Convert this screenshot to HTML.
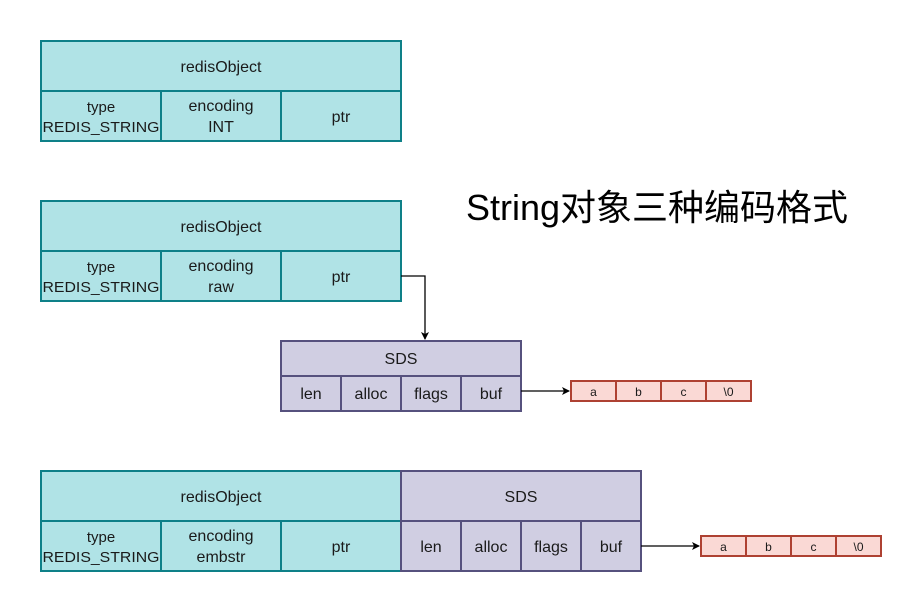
<!DOCTYPE html>
<html><head><meta charset="utf-8"><style>html,body{margin:0;padding:0;background:#fff;}svg{display:block}</style></head>
<body>
<svg width="923" height="613" viewBox="0 0 923 613" xmlns="http://www.w3.org/2000/svg" font-family="Liberation Sans, Noto Sans CJK SC, sans-serif" fill="#1a1a1a">
<defs><marker id="ar" markerWidth="8" markerHeight="8" refX="7" refY="4" orient="auto" markerUnits="userSpaceOnUse"><path d="M0,0 L8,4 L0,8 L2,4 z" fill="#000"/></marker></defs>
<g stroke="#0e8088" stroke-width="2" fill="#b0e3e6">
<rect x="41" y="41" width="360" height="50"/><rect x="41" y="91" width="120" height="50"/><rect x="161" y="91" width="120" height="50"/><rect x="281" y="91" width="120" height="50"/>
<rect x="41" y="201" width="360" height="50"/><rect x="41" y="251" width="120" height="50"/><rect x="161" y="251" width="120" height="50"/><rect x="281" y="251" width="120" height="50"/>
<rect x="41" y="471" width="360" height="50"/><rect x="41" y="521" width="120" height="50"/><rect x="161" y="521" width="120" height="50"/><rect x="281" y="521" width="120" height="50"/>
</g>
<g stroke="#56517e" stroke-width="2" fill="#d0cee2">
<rect x="281" y="341" width="240" height="35"/><rect x="281" y="376" width="60" height="35"/><rect x="341" y="376" width="60" height="35"/><rect x="401" y="376" width="60" height="35"/><rect x="461" y="376" width="60" height="35"/>
<rect x="401" y="471" width="240" height="50"/><rect x="401" y="521" width="60" height="50"/><rect x="461" y="521" width="60" height="50"/><rect x="521" y="521" width="60" height="50"/><rect x="581" y="521" width="60" height="50"/>
</g>
<g stroke="#ae4132" stroke-width="2" fill="#fad9d5">
<rect x="571" y="381" width="45" height="20"/><rect x="616" y="381" width="45" height="20"/><rect x="661" y="381" width="45" height="20"/><rect x="706" y="381" width="45" height="20"/>
<rect x="701" y="536" width="45" height="20"/><rect x="746" y="536" width="45" height="20"/><rect x="791" y="536" width="45" height="20"/><rect x="836" y="536" width="45" height="20"/>
</g>
<g stroke="#000" stroke-width="1.3" fill="none">
<path d="M401,276 H425 V339" marker-end="url(#ar)"/>
<path d="M521,391 H569" marker-end="url(#ar)"/>
<path d="M641,546 H699" marker-end="url(#ar)"/>
</g>
<g font-size="16" text-anchor="middle">
<text x="221" y="72">redisObject</text>
<text x="101" y="112" font-size="15">type</text><text x="101" y="132" font-size="15" textLength="117" lengthAdjust="spacingAndGlyphs">REDIS_STRING</text>
<text x="221" y="111">encoding</text><text x="221" y="132">INT</text><text x="341" y="122">ptr</text>
<text x="221" y="232">redisObject</text>
<text x="101" y="272" font-size="15">type</text><text x="101" y="292" font-size="15" textLength="117" lengthAdjust="spacingAndGlyphs">REDIS_STRING</text>
<text x="221" y="271">encoding</text><text x="221" y="292">raw</text><text x="341" y="282">ptr</text>
<text x="401" y="364">SDS</text>
<text x="311" y="399">len</text><text x="371" y="399">alloc</text><text x="431" y="399">flags</text><text x="491" y="399">buf</text>
<text x="221" y="502">redisObject</text>
<text x="101" y="542" font-size="15">type</text><text x="101" y="562" font-size="15" textLength="117" lengthAdjust="spacingAndGlyphs">REDIS_STRING</text>
<text x="221" y="541">encoding</text><text x="221" y="562">embstr</text><text x="341" y="552">ptr</text>
<text x="521" y="502">SDS</text>
<text x="431" y="552">len</text><text x="491" y="552">alloc</text><text x="551" y="552">flags</text><text x="611" y="552">buf</text>
<g font-size="12"><text x="593.5" y="396">a</text><text x="638.5" y="396">b</text><text x="683.5" y="396">c</text><text x="728.5" y="396">\0</text>
<text x="723.5" y="551">a</text><text x="768.5" y="551">b</text><text x="813.5" y="551">c</text><text x="858.5" y="551">\0</text></g>
</g>
<text x="466" y="220" font-size="36" textLength="382" lengthAdjust="spacingAndGlyphs" fill="#000">String对象三种编码格式</text>
</svg>
</body></html>
